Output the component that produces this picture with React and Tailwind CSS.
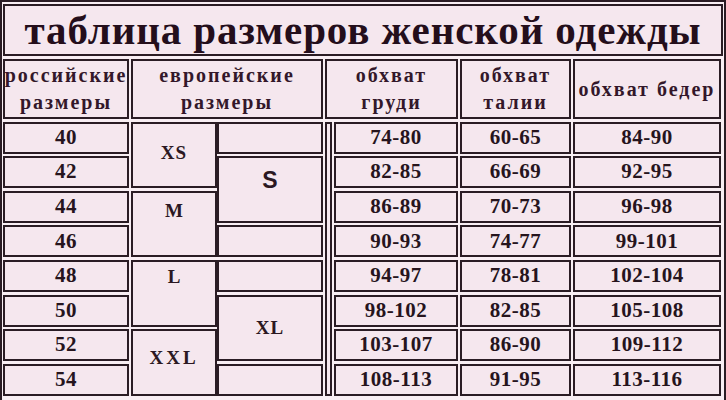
import React from "react";

// one bordered cell of the size chart
function Cell({ className = "", children }) {
  return (
    <div
      className={`flex items-center justify-center border-2 border-[#2a1c24] bg-[#f5e7ee] text-[#2b1822] ${className}`}
    >
      {children}
    </div>
  );
}

const rows = [
  { ru: "40", chest: "74-80", waist: "60-65", hips: "84-90" },
  { ru: "42", chest: "82-85", waist: "66-69", hips: "92-95" },
  { ru: "44", chest: "86-89", waist: "70-73", hips: "96-98" },
  { ru: "46", chest: "90-93", waist: "74-77", hips: "99-101" },
  { ru: "48", chest: "94-97", waist: "78-81", hips: "102-104" },
  { ru: "50", chest: "98-102", waist: "82-85", hips: "105-108" },
  { ru: "52", chest: "103-107", waist: "86-90", hips: "109-112" },
  { ru: "54", chest: "108-113", waist: "91-95", hips: "113-116" },
];

// row starts are 1-based inside the grid, header is row 1
const rowStart = [
  "row-start-2",
  "row-start-3",
  "row-start-4",
  "row-start-5",
  "row-start-6",
  "row-start-7",
  "row-start-8",
  "row-start-9",
];

export default function App() {
  const head = "text-[20px] font-bold leading-[27px] tracking-[2px] text-center text-[#33172a]";
  const num = "text-[21px] font-bold tracking-[0.5px] text-[#26141d]";
  const eu = "text-[19px] font-bold";

  return (
    <div
      className="w-[726px] h-[400px] overflow-hidden bg-[#f8eef3] border-t-2 border-x-2 border-[#2a1c24] pt-[2px] px-[1px]"
      style={{ fontFamily: '"Liberation Serif", "Times New Roman", serif' }}
    >
      <div className="h-[52px] border-2 border-[#2a1c24] bg-[#f5e7ee] flex items-center justify-center">
        <span className="text-[41px] font-bold tracking-[0.9px] text-[#240e1b] leading-none">
          таблица размеров женской одежды
        </span>
      </div>

      <div className="mt-[3px] grid grid-cols-[126px_84px_106px_7px_124px_111px_148px] grid-rows-[60px_repeat(8,32px)] gap-x-[2px] gap-y-[2.6px]">
        {/* header */}
        <Cell className={`col-start-1 row-start-1 ${head}`}>
          <span>
            российские
            <br />
            размеры
          </span>
        </Cell>
        <Cell className={`col-start-2 col-span-2 row-start-1 ${head}`}>
          <span>
            европейские
            <br />
            размеры
          </span>
        </Cell>
        <Cell className={`col-start-4 col-span-2 row-start-1 ${head}`}>
          <span>
            обхват
            <br />
            груди
          </span>
        </Cell>
        <Cell className={`col-start-6 row-start-1 ${head}`}>
          <span>
            обхват
            <br />
            талии
          </span>
        </Cell>
        <Cell className={`col-start-7 row-start-1 ${head}`}>
          <span>обхват бедер</span>
        </Cell>

        {/* russian sizes and measurements */}
        {rows.map((r, i) => (
          <React.Fragment key={r.ru}>
            <Cell className={`col-start-1 ${rowStart[i]} ${num}`}>{r.ru}</Cell>
            <Cell className={`col-start-5 ${rowStart[i]} ${num}`}>{r.chest}</Cell>
            <Cell className={`col-start-6 ${rowStart[i]} ${num}`}>{r.waist}</Cell>
            <Cell className={`col-start-7 ${rowStart[i]} ${num}`}>{r.hips}</Cell>
          </React.Fragment>
        ))}

        {/* european sizes, first column */}
        <Cell className={`col-start-2 row-start-2 row-span-2 -mr-[2px] pb-[4px] tracking-[1px] ${eu}`}>XS</Cell>
        <Cell className={`col-start-2 row-start-4 row-span-2 -mr-[2px] pb-[26px] ${eu}`}>M</Cell>
        <Cell className={`col-start-2 row-start-6 row-span-2 -mr-[2px] pb-[32px] ${eu}`}>L</Cell>
        <Cell className={`col-start-2 row-start-8 row-span-2 -mr-[2px] pb-[8px] tracking-[3px] ${eu}`}>XXL</Cell>

        {/* european sizes, second column */}
        <Cell className="col-start-3 row-start-2" />
        <Cell className="col-start-3 row-start-3 row-span-2 pb-[18px] text-[23px] font-bold text-[#1c1218] font-['Liberation_Sans',Arial,sans-serif]">
          S
        </Cell>
        <Cell className="col-start-3 row-start-5" />
        <Cell className="col-start-3 row-start-6" />
        <Cell className={`col-start-3 row-start-7 row-span-2 tracking-[1px] ${eu}`}>XL</Cell>
        <Cell className="col-start-3 row-start-9" />

        {/* narrow divider column */}
        <Cell className="col-start-4 row-start-2 row-span-8" />
      </div>
    </div>
  );
}
